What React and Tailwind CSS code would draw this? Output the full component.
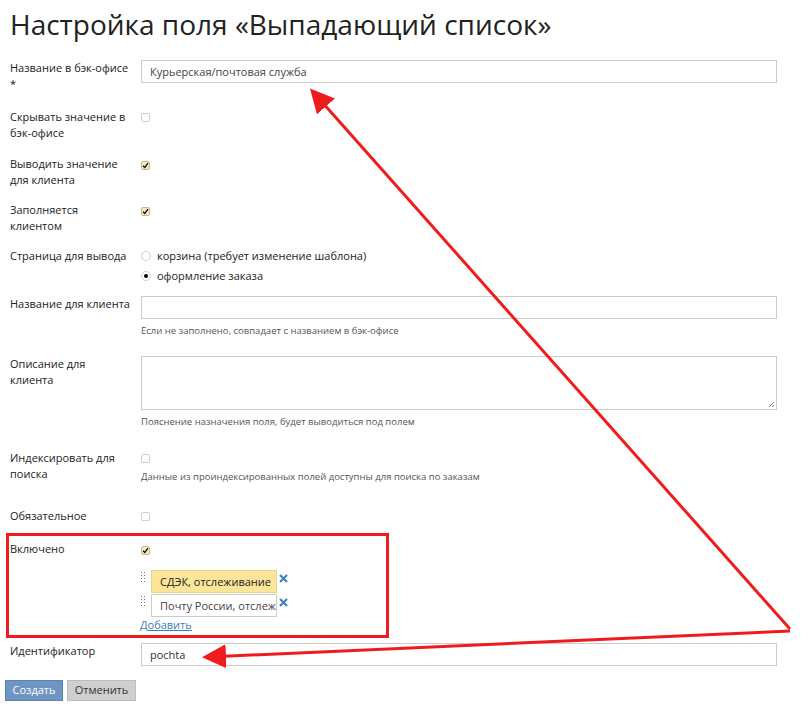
import React from "react";

const Check = ({ on }) => (
  <span className={`inline-flex w-[9px] h-[9px] rounded-[2px] border items-center justify-center ${on ? "bg-[#f3e7c4] border-[#cbb98a]" : "bg-white border-[#cfcfcf]"}`}>
    {on && <svg width="7" height="7" viewBox="0 0 7 7"><path d="M1 3.8 L2.8 5.5 L6 1.2" stroke="#111" strokeWidth="1.3" fill="none" /></svg>}
  </span>
);
const Radio = ({ on }) => (
  <span className="inline-flex w-[10px] h-[10px] rounded-full border border-[#cfcfcf] bg-white items-center justify-center">
    {on && <span className="w-[4px] h-[4px] rounded-full bg-black" />}
  </span>
);
const Row = ({ label, children, cls = "" }) => (
  <div className={`flex ${cls}`}>
    <div className="w-[121px] mr-[10px] shrink-0 leading-[16px]">{label}</div>
    <div className="flex-1">{children}</div>
  </div>
);
const Grip = () => (
  <svg width="11" height="12" viewBox="0 0 11 12" className="shrink-0 self-start mt-[1px]">
    {[1, 4, 7, 10].map((y) => (
      <g key={y}><rect x="1" y={y} width="1" height="1" fill="#777" /><rect x="4" y={y} width="1" height="1" fill="#777" /></g>
    ))}
  </svg>
);
const X = () => (
  <svg width="9" height="9" viewBox="0 0 9 9" className="ml-[2px] self-start mt-[4px]"><path d="M1 1L8 8M8 1L1 8" stroke="#3b7ec2" strokeWidth="2" /></svg>
);
const Hint = ({ children, cls = "mt-[5px]" }) => <div className={`text-[9.5px] text-[#555] ${cls}`}>{children}</div>;

export default function App() {
  return (
    <div className="relative w-[809px] h-[711px] bg-white text-[11px] text-[#222] overflow-hidden" style={{ fontFamily: '"Open Sans", sans-serif' }}>
      <h1 className="pl-[10px] pt-[4px] text-[28px] leading-[40px] text-[#222] h-[60px]">Настройка поля «Выпадающий список»</h1>
      <div className="px-[10px] flex flex-col">
        <Row label="Название в бэк-офисе *" cls="h-[49px]">
          <div className="w-[636px] h-[23px] border border-[#ccc] px-[8px] leading-[21px] text-[#444]">Курьерская/почтовая служба</div>
        </Row>
        <Row label="Скрывать значение в бэк-офисе" cls="h-[47px]"><div className="pt-[1px]"><Check /></div></Row>
        <Row label="Выводить значение для клиента" cls="h-[46px]"><div className="pt-[1px]"><Check on /></div></Row>
        <Row label="Заполняется клиентом" cls="h-[46px]"><div className="pt-[1px]"><Check on /></div></Row>
        <Row label="Страница для вывода" cls="h-[48px]">
          <div className="flex flex-col gap-[4px]">
            <div className="flex items-center gap-[6px] h-[16px]"><Radio />корзина (требует изменение шаблона)</div>
            <div className="flex items-center gap-[6px] h-[16px]"><Radio on />оформление заказа</div>
          </div>
        </Row>
        <Row label="Название для клиента" cls="h-[60px]">
          <div className="w-[636px] h-[23px] border border-[#ccc]" />
          <Hint>Если не заполнено, совпадает с названием в бэк-офисе</Hint>
        </Row>
        <Row label="Описание для клиента" cls="h-[94px]">
          <div className="w-[636px] h-[54px] border border-[#ccc] relative">
            <svg className="absolute right-[1px] bottom-[1px]" width="7" height="7"><path d="M6 1L1 6M6 4L4 6" stroke="#777" /></svg>
          </div>
          <Hint>Пояснение назначения поля, будет выводиться под полем</Hint>
        </Row>
        <Row label="Индексировать для поиска" cls="h-[58px]">
          <div className="pt-[1px] h-[12px]"><Check /></div>
          <Hint cls="mt-[8px]">Данные из проиндексированных полей доступны для поиска по заказам</Hint>
        </Row>
        <Row label="Обязательное" cls="h-[25px]"><div className="pt-[1px]"><Check /></div></Row>
        <div className="ml-[-4px] w-[383px] h-[105px] border-[3px] border-[#ee1c1c] pl-[1px] pt-[5px]">
          <Row label="Включено">
            <div className="pt-[1px] h-[12px]"><Check on /></div>
            <div className="mt-[17px] flex flex-col gap-[1px] ml-[-1px]">
              <div className="flex items-center">
                <Grip />
                <div className="w-[126px] h-[23px] bg-[#fde69a] border border-[#e8d48a] px-[8px] leading-[21px] overflow-hidden whitespace-nowrap">СДЭК, отслеживание</div>
                <X />
              </div>
              <div className="flex items-center">
                <Grip />
                <div className="w-[126px] h-[23px] bg-white border border-[#ccc] px-[8px] leading-[21px] text-[#444] overflow-hidden whitespace-nowrap">Почту России, отслеживание</div>
                <X />
              </div>
              <a className="text-[#3b7ec2] underline leading-[14px]">Добавить</a>
            </div>
          </Row>
        </div>
        <Row label="Идентификатор" cls="mt-[5px] h-[37px]">
          <div className="w-[636px] h-[23px] border border-[#ccc] px-[8px] leading-[21px] text-[#333]">pochta</div>
        </Row>
        <div className="flex gap-[4px] ml-[-5px]">
          <button className="w-[58px] h-[21px] bg-[#6f95c4] text-white border border-[#5f84b2]">Создать</button>
          <button className="w-[69px] h-[21px] bg-[#cfcfcf] text-[#333] border border-[#bdbdbd]">Отменить</button>
        </div>
      </div>
      <svg className="absolute inset-0 pointer-events-none" width="809" height="711">
        <defs>
          <marker id="ah" markerWidth="8" markerHeight="8" refX="6" refY="4" orient="auto" markerUnits="strokeWidth">
            <path d="M0 0L8 4L0 8z" fill="#ee1c1c" />
          </marker>
        </defs>
        <line x1="790" y1="629" x2="314" y2="93" stroke="#ee1c1c" strokeWidth="3" markerEnd="url(#ah)" />
        <line x1="790" y1="631" x2="208" y2="657" stroke="#ee1c1c" strokeWidth="3" markerEnd="url(#ah)" />
      </svg>
    </div>
  );
}
